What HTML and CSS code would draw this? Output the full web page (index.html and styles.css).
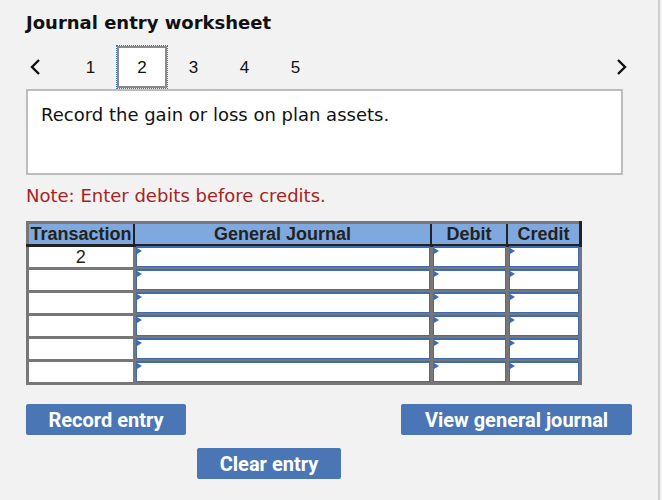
FILE: index.html
```html
<!DOCTYPE html>
<html lang="en">
<head>
    <meta charset="UTF-8">
    <title>Journal entry worksheet</title>
    <link rel="stylesheet" href="styles.css">
</head>
<body>
    <div class="page">
        <h1 class="title">Journal entry worksheet</h1>

        <div class="tabs">
            <span class="arrow">
                <svg width="12" height="18" viewBox="0 0 12 18"><path d="M10 2 L3 9 L10 16" fill="none" stroke="#111" stroke-width="2.4"/></svg>
            </span>
            <span class="tab">1</span>
            <span class="tab active">2</span>
            <span class="tab">3</span>
            <span class="tab">4</span>
            <span class="tab">5</span>
            <span class="spacer"></span>
            <span class="arrow right">
                <svg width="12" height="18" viewBox="0 0 12 18"><path d="M2 2 L9 9 L2 16" fill="none" stroke="#111" stroke-width="2.4"/></svg>
            </span>
        </div>

        <div class="prompt">Record the gain or loss on plan assets.</div>

        <p class="note">Note: Enter debits before credits.</p>

        <table class="journal">
            <tr>
                <th class="col-trans">Transaction</th>
                <th class="col-gj">General Journal</th>
                <th class="col-dr">Debit</th>
                <th class="col-cr">Credit</th>
            </tr>
            <tr>
                <td class="trans">2</td>
                <td><div class="field"></div></td>
                <td><div class="field"></div></td>
                <td><div class="field"></div></td>
            </tr>
            <tr>
                <td class="trans"></td>
                <td><div class="field"></div></td>
                <td><div class="field"></div></td>
                <td><div class="field"></div></td>
            </tr>
            <tr>
                <td class="trans"></td>
                <td><div class="field"></div></td>
                <td><div class="field"></div></td>
                <td><div class="field"></div></td>
            </tr>
            <tr>
                <td class="trans"></td>
                <td><div class="field"></div></td>
                <td><div class="field"></div></td>
                <td><div class="field"></div></td>
            </tr>
            <tr>
                <td class="trans"></td>
                <td><div class="field"></div></td>
                <td><div class="field"></div></td>
                <td><div class="field"></div></td>
            </tr>
            <tr>
                <td class="trans"></td>
                <td><div class="field"></div></td>
                <td><div class="field"></div></td>
                <td><div class="field"></div></td>
            </tr>
        </table>

        <div class="buttons">
            <button class="btn record">Record entry</button>
            <button class="btn view">View general journal</button>
        </div>
        <div class="buttons">
            <button class="btn clear">Clear entry</button>
        </div>
    </div>
</body>
</html>
```

FILE: styles.css
```css
html, body { margin: 0; padding: 0; background: #f2f2f2; }
.page { width: 660px; height: 500px; border-right: 2px solid #cfcfcf; box-sizing: border-box; padding: 13px 0 0 26px; }

.title { margin: 0; font-family: "DejaVu Sans", Verdana, sans-serif; font-size: 18px; font-weight: bold; color: #111; line-height: 20px; }

.tabs { display: flex; align-items: center; height: 44px; margin-top: 12px; width: 606px; }
.arrow { width: 39px; display: flex; align-items: center; padding-left: 3px; box-sizing: border-box; }
.arrow.right { width: 16px; padding-left: 0; }
.spacer { flex: 1; }
.tab { width: 51px; height: 44px; display: flex; align-items: center; justify-content: center; font-family: "Liberation Sans", Arial, sans-serif; font-size: 17px; color: #111; box-sizing: border-box; padding-top: 2px; }
.tab.active { background: #fff; border: 2px solid #8a8a8a; outline: 1px dotted #3e70c0; width: 50px; height: 42px; margin: 0 1px 0 1px; }

.prompt { width: 597px; height: 86px; box-sizing: border-box; background: #fff; border: 2px solid #bdbdbd; padding: 13px 13px; font-family: "DejaVu Sans", Verdana, sans-serif; font-size: 18px; color: #111; line-height: 22px; }

.note { margin: 10px 0 0; font-family: "DejaVu Sans", Verdana, sans-serif; font-size: 18px; color: #a8231f; line-height: 22px; }

.journal { margin-top: 14px; border-collapse: collapse; border: 3px solid #777; font-family: "Liberation Sans", Arial, sans-serif; }
.journal th { background: #7fa8de; color: #222; font-size: 18px; font-weight: bold; height: 20px; padding: 0; border-right: 2px solid #222; border-bottom: 3px solid #222; line-height: 20px; }
.journal th:last-child { border-right: 3px solid #222; }
.col-trans { width: 104px; }
.col-gj { width: 295px; }
.col-dr { width: 74px; }
.col-cr { width: 71px; }
.journal td { height: 20px; padding: 0; border: 3px solid #777; background: #fff; }
.journal td.trans { text-align: center; font-size: 18px; color: #222; line-height: 20px; }
.field { position: relative; height: 18px; border: 1px solid #3d6cb5; border-top-width: 2px; margin-top: -1px; }
.field::before { content: ""; position: absolute; left: 0; top: 0; border-left: 5px solid #3d6cb5; border-top: 3px solid transparent; border-bottom: 3px solid transparent; }

.buttons { display: flex; justify-content: space-between; width: 606px; margin-top: 19px; }
.buttons + .buttons { margin-top: 13px; }
.btn { height: 31px; padding: 0; background: #4a76b5; color: #fff; border: none; border-radius: 2px; font-family: Roboto, "Liberation Sans", sans-serif; font-size: 20px; font-weight: bold; }
.btn.record { width: 160px; }
.btn.view { width: 231px; }
.btn.clear { margin-left: 171px; width: 144px; }
```
